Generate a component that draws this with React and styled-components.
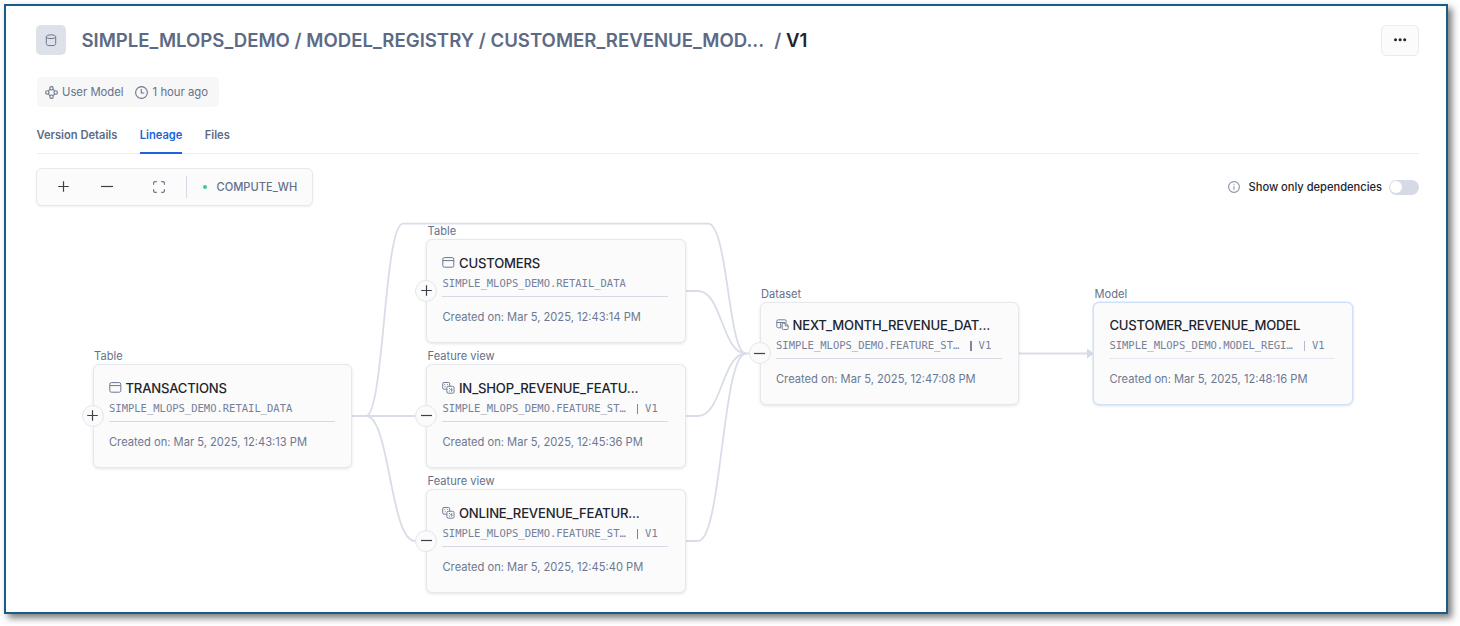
import React from "react";
import styled, { createGlobalStyle, css } from "styled-components";

const GlobalStyle = createGlobalStyle`
  *, *::before, *::after { box-sizing: border-box; }
  body {
    margin: 0;
    background: #fff;
    font-family: Inter, "Liberation Sans", sans-serif;
    color: #64718b;
    overflow: hidden;
  }
`;

const Page = styled.div`
  width: 1460px;
  height: 626px;
  padding: 4px 12px 12px 4px;
`;

const Frame = styled.main`
  width: 1444px;
  height: 610px;
  border: 2px solid #1a5c85;
  background: #fff;
  box-shadow: 4px 4px 7px rgba(0, 0, 0, 0.52);
  display: flex;
  flex-direction: column;
`;

const Top = styled.div`
  padding: 19px 27.5px 0 30.5px;
`;

const Header = styled.header`
  display: flex;
  align-items: center;
  height: 30px;
`;

const IconTile = styled.div`
  width: 30px;
  height: 30px;
  border-radius: 5px;
  background: #dde2ea;
  display: flex;
  align-items: center;
  justify-content: center;
  margin-right: 15px;
  margin-left: -0.1px;
`;

const Crumbs = styled.h1`
  margin: 0;
  flex: 1;
  font-size: 18.6px;
  font-weight: 600;
  line-height: 30px;
  color: #5d6a85;
  white-space: nowrap;
`;

const Gap = styled.span`
  display: inline-block;
  width: 10px;
`;

const Current = styled.span`
  color: #1e252f;
`;

const MoreButton = styled.button`
  width: 38px;
  height: 31px;
  padding: 0;
  border: 1px solid #e9ebef;
  border-radius: 5px;
  background: #fbfbfb;
  display: flex;
  align-items: center;
  justify-content: center;
`;

const Meta = styled.div`
  display: inline-flex;
  align-items: center;
  height: 30px;
  width: 182.5px;
  margin-top: 22px;
  padding: 0 8px;
  border-radius: 5px;
  background: #f7f7f7;
  font-size: 11.3px;
  white-space: nowrap;
`;

const MetaItem = styled.span`
  display: inline-flex;
  align-items: center;
  gap: 4.5px;
  margin-right: 11.5px;
`;

const Tabs = styled.nav`
  display: flex;
  gap: 22.3px;
  height: 38px;
  margin-top: 9px;
  border-bottom: 1px solid #eceef1;
`;

const Tab = styled.a`
  height: 38px;
  line-height: 38px;
  font-size: 11.15px;
  font-weight: 600;
  color: ${(p) => (p.$active ? "#1a63d8" : "#5d6a85")};
  box-shadow: ${(p) => (p.$active ? "inset 0 -2px 0 #1a63d8" : "none")};
`;

const Controls = styled.div`
  display: flex;
  justify-content: space-between;
  align-items: center;
  margin-top: 14px;
  height: 38px;
`;

const Toolbar = styled.div`
  display: flex;
  align-items: center;
  width: 277px;
  height: 38px;
  margin-left: -0.9px;
  border: 1px solid #e6e8ed;
  border-radius: 6px;
  background: #fbfbfb;
  box-shadow: 0 1px 2px rgba(30, 40, 60, 0.08);
`;

const ToolButton = styled.button`
  width: ${(p) => p.$w}px;
  height: 36px;
  padding: ${(p) => `0 0 1px ${p.$shift || 0}px`};
  border: 0;
  background: none;
  display: flex;
  align-items: center;
  justify-content: center;
`;

const Separator = styled.span`
  width: 1px;
  height: 22px;
  background: #d5dae4;
`;

const Warehouse = styled.span`
  display: flex;
  align-items: center;
  font-size: 11.1px;
  font-weight: 500;
  padding-left: 16.5px;
`;

const StatusDot = styled.i`
  width: 4px;
  height: 4px;
  border-radius: 50%;
  background: #3fc795;
  margin-right: 9.5px;
`;

const Dependencies = styled.label`
  display: flex;
  align-items: center;
  font-size: 11.12px;
  font-weight: 500;
  color: #1e252f;
  svg { margin-right: 9px; }
`;

const Switch = styled.span`
  width: 30px;
  height: 15px;
  padding: 1.5px;
  margin-left: 6.5px;
  border-radius: 8px;
  background: #d5dae4;
  &::before {
    content: "";
    display: block;
    width: 12px;
    height: 12px;
    border-radius: 50%;
    background: #fff;
  }
`;

const Canvas = styled.section`
  position: relative;
  flex: 1;
`;

const Edges = styled.svg`
  position: absolute;
  left: 0;
  top: 0;
  width: 1440px;
  height: 400px;
`;

const Node = styled.article`
  position: absolute;
  left: ${(p) => p.$x}px;
  top: ${(p) => p.$y}px;
  width: 259.5px;
`;

const Kind = styled.div`
  height: 16px;
  line-height: 16px;
  padding-left: 1.5px;
  font-size: 11.1px;
`;

const Card = styled.div`
  height: 103.5px;
  padding: 13.8px 15px 0 15.4px;
  border: 1px solid #e6e8ed;
  border-radius: 6px;
  background: #fbfbfb;
  box-shadow: 0 1px 3px rgba(30, 40, 60, 0.12);
  ${(p) => p.$selected && css`
    border-color: #cfe0fb;
    box-shadow: 0 0 0 0.5px #d5e4fc, 0 1px 3px rgba(30, 40, 60, 0.12);
  `}
`;

const CardTitle = styled.div`
  display: flex;
  align-items: center;
  gap: 3.5px;
  height: 18px;
  font-size: 13.1px;
  letter-spacing: -0.19px;
  font-weight: 500;
  color: #1e252f;
  white-space: nowrap;
`;

const CardPath = styled.div`
  display: flex;
  height: 25px;
  line-height: 23px;
  width: 226px;
  border-bottom: 1px solid ${(p) => (p.$selected ? "#e3e8f1" : "#d5dae4")};
  font-family: "DejaVu Sans Mono", monospace;
  font-size: 10.5px;
  color: #75809a;
  white-space: pre;
`;

const Version = styled.span`
  display: flex;
  align-items: center;
  height: 23px;
  margin-left: 11px;
  &::before {
    content: "";
    width: 1.3px;
    height: 10px;
    margin-right: 7px;
    background: ${(p) => (p.$selected ? "#b4bccb" : "#7c879d")};
  }
`;

const Created = styled.div`
  margin-top: 10.5px;
  line-height: 18px;
  font-size: 11.15px;
  color: #6c7892;
  white-space: nowrap;
`;

const Expander = styled.button`
  position: absolute;
  left: -11px;
  top: 56.7px;
  width: 22px;
  height: 22px;
  padding: 0;
  border: 1px solid #e3e6ec;
  border-radius: 50%;
  background: #fbfbfb;
  display: flex;
  align-items: center;
  justify-content: center;
`;

const Plus = ({ size = 11 }) => (
  <svg width={size} height={size} viewBox="0 0 11 11" stroke="#3b424d" strokeWidth="1.2" fill="none">
    <path d="M5.5 0.2v10.6M0.2 5.5h10.6" />
  </svg>
);

const Minus = ({ size = 11 }) => (
  <svg width={size} height="3" viewBox={`0 0 ${size} 3`} stroke="#3b424d" strokeWidth="1.2">
    <path d={`M0 1.5h${size}`} />
  </svg>
);

const iconProps = { fill: "none", stroke: "#6b7790", strokeWidth: 1 };

const DatabaseIcon = () => (
  <svg width="12" height="13" viewBox="0 0 12 13" {...iconProps}>
    <ellipse cx="6" cy="2.7" rx="4.7" ry="1.9" />
    <path d="M1.300 2.700v7c0 1.200 1.200 1.900 2.600 1.900h4.200c1.400 0 2.600-.7 2.600-1.900v-7" />
  </svg>
);

const ModelIcon = () => (
  <svg width="13" height="13" viewBox="0 0 13 13" {...iconProps} strokeWidth="1.1">
    <circle cx="6.5" cy="2.3" r="1.7" />
    <circle cx="6.5" cy="10.7" r="1.7" />
    <circle cx="2.3" cy="6.5" r="1.7" />
    <circle cx="10.7" cy="6.5" r="1.7" />
    <path d="M4.9 3.3 3.5 4.8M8.1 3.3 9.5 4.8M4.9 9.7 3.5 8.2M8.1 9.7 9.5 8.2" />
  </svg>
);

const ClockIcon = () => (
  <svg width="13" height="13" viewBox="0 0 13 13" {...iconProps} strokeWidth="1.1">
    <circle cx="6.5" cy="6.5" r="5.9" />
    <path d="M6.3 3v4h3" />
  </svg>
);

const FitIcon = () => (
  <svg width="12" height="12" viewBox="0 0 12 12" {...iconProps} strokeWidth="1.2">
    <path d="M.6 3.8V2A1.4 1.4 0 0 1 2 .6h1.8M8.2 .6H10A1.4 1.4 0 0 1 11.4 2v1.8M11.4 8.2V10a1.4 1.4 0 0 1-1.4 1.4H8.2M3.8 11.4H2A1.4 1.4 0 0 1 .6 10V8.2" />
  </svg>
);

const InfoIcon = () => (
  <svg width="12" height="12" viewBox="0 0 12 12" fill="none" stroke="#8a94a9" strokeWidth="1.1">
    <circle cx="6" cy="6" r="5.4" />
    <path d="M6 5.2v3.6M6 3.2v1.1" />
  </svg>
);

const MoreIcon = () => (
  <svg width="14" height="4" viewBox="0 0 14 4" fill="#1e252f">
    <circle cx="2.5" cy="1.7" r="1.5" />
    <circle cx="7.1" cy="1.7" r="1.5" />
    <circle cx="11.7" cy="1.7" r="1.5" />
  </svg>
);

const TableIcon = () => (
  <svg width="13" height="12" viewBox="0 0 13 12" {...iconProps}>
    <rect x="0.8" y="0.6" width="11" height="9.6" rx="1.6" />
    <path d="M.8 3.6h11" />
  </svg>
);

const FeatureIcon = () => (
  <svg width="13" height="12" viewBox="0 0 13 12" {...iconProps} strokeWidth="0.95">
    <path d="M4.8 7.2H2A1.3 1.3 0 0 1 .7 5.9V1.8A1.3 1.3 0 0 1 2 .5h4.4a1.3 1.3 0 0 1 1.3 1.3v2.4" />
    <rect x="4.9" y="4.3" width="7.1" height="6.9" rx="1.3" />
    <path d="M2.4 2.5h.8M5.2 2.5h.8M2.6 4.9l1-.6" />
    <path d="M6.9 6.5h1M9.3 6.5h.9M6.9 9h1M8.3 7.7H10V9H9" />
  </svg>
);

const DatasetIcon = () => (
  <svg width="13" height="12" viewBox="0 0 13 12" {...iconProps} strokeWidth="0.95">
    <path d="M5 8.8H2.3A1.5 1.5 0 0 1 .8 7.3v-5A1.5 1.5 0 0 1 2.3.8h6.5a1.5 1.5 0 0 1 1.5 1.5v1.2M.8 3.5h8.4M4.7 3.5v5.3" />
    <path fill="#fbfbfb" d="M6.2 5.5a1.3 1.3 0 0 1 1.3-1.3h2.2l2.5 2.3v2.7a1.3 1.3 0 0 1-1.3 1.3H7.5a1.3 1.3 0 0 1-1.3-1.3z" />
    <path d="M9.3 4.4v2.4H12" />
  </svg>
);

const icons = { table: TableIcon, feature: FeatureIcon, dataset: DatasetIcon };

const nodes = [
  { x: 86.6, y: 142.3, kind: "Table", icon: "table", title: "TRANSACTIONS", path: "SIMPLE_MLOPS_DEMO.RETAIL_DATA", at: "12:43:13 PM", toggle: "plus" },
  { x: 420.1, y: 17.3, kind: "Table", icon: "table", title: "CUSTOMERS", path: "SIMPLE_MLOPS_DEMO.RETAIL_DATA", at: "12:43:14 PM", toggle: "plus" },
  { x: 420.1, y: 142.3, kind: "Feature view", icon: "feature", title: "IN_SHOP_REVENUE_FEATU...", path: "SIMPLE_MLOPS_DEMO.FEATURE_ST…", version: "V1", at: "12:45:36 PM", toggle: "minus" },
  { x: 420.1, y: 267.3, kind: "Feature view", icon: "feature", title: "ONLINE_REVENUE_FEATUR...", path: "SIMPLE_MLOPS_DEMO.FEATURE_ST…", version: "V1", at: "12:45:40 PM", toggle: "minus" },
  { x: 753.6, y: 79.6, kind: "Dataset", icon: "dataset", title: "NEXT_MONTH_REVENUE_DAT...", path: "SIMPLE_MLOPS_DEMO.FEATURE_ST…", version: "V1", at: "12:47:08 PM", toggle: "minus" },
  { x: 1087, y: 79.6, kind: "Model", title: "CUSTOMER_REVENUE_MODEL", path: "SIMPLE_MLOPS_DEMO.MODEL_REGI…", version: "V1", at: "12:48:16 PM", selected: true },
];

function LineageNode({ x, y, kind, icon, title, path, version, at, toggle, selected }) {
  const Icon = icons[icon];
  return (
    <Node $x={x} $y={y}>
      <Kind>{kind}</Kind>
      <Card $selected={selected}>
        <CardTitle>
          {Icon && <Icon />}
          {title}
        </CardTitle>
        <CardPath $selected={selected}>
          {path}
          {version && <Version $selected={selected}>{version}</Version>}
        </CardPath>
        <Created>Created on: Mar 5, 2025, {at}</Created>
      </Card>
      {toggle && <Expander>{toggle === "plus" ? <Plus /> : <Minus />}</Expander>}
    </Node>
  );
}

export default function App() {
  return (
    <Page>
      <GlobalStyle />
      <Frame>
        <Top>
          <Header>
            <IconTile><DatabaseIcon /></IconTile>
            <Crumbs>
              SIMPLE_MLOPS_DEMO / MODEL_REGISTRY / CUSTOMER_REVENUE_MOD...<Gap />/ <Current>V1</Current>
            </Crumbs>
            <MoreButton><MoreIcon /></MoreButton>
          </Header>
          <Meta>
            <MetaItem><ModelIcon />User Model</MetaItem>
            <MetaItem><ClockIcon />1 hour ago</MetaItem>
          </Meta>
          <Tabs>
            <Tab>Version Details</Tab>
            <Tab $active>Lineage</Tab>
            <Tab>Files</Tab>
          </Tabs>
          <Controls>
            <Toolbar>
              <ToolButton $w={52} $shift={1}><Plus /></ToolButton>
              <ToolButton $w={37}><Minus size={12} /></ToolButton>
              <ToolButton $w={60} $shift={6}><FitIcon /></ToolButton>
              <Separator />
              <Warehouse><StatusDot />COMPUTE_WH</Warehouse>
            </Toolbar>
            <Dependencies>
              <InfoIcon />
              Show only dependencies
              <Switch />
            </Dependencies>
          </Controls>
        </Top>
        <Canvas>
          <Edges viewBox="6 206 1440 400" fill="none" stroke="#d9dde8" strokeWidth="1.8">
            <path d="M352 416H427" />
            <path d="M352 416H366C384 416 384 223.7 403 223.7H708C728 223.7 728 353.5 746 353.5H760" />
            <path d="M352 416H366C390 416 390 541 415 541H427" />
            <path d="M686 291H698C722 291 722 353.5 746 353.5" />
            <path d="M686 416H698C722 416 722 353.5 746 353.5" />
            <path d="M686 541H698C722 541 722 353.5 746 353.5" />
            <path d="M1019 353.5H1090" />
            <path d="M1087 348.5L1094 353.5L1087 358.5Z" fill="#d5dae4" stroke="none" />
          </Edges>
          {nodes.map((n) => <LineageNode key={n.title} {...n} />)}
        </Canvas>
      </Frame>
    </Page>
  );
}
